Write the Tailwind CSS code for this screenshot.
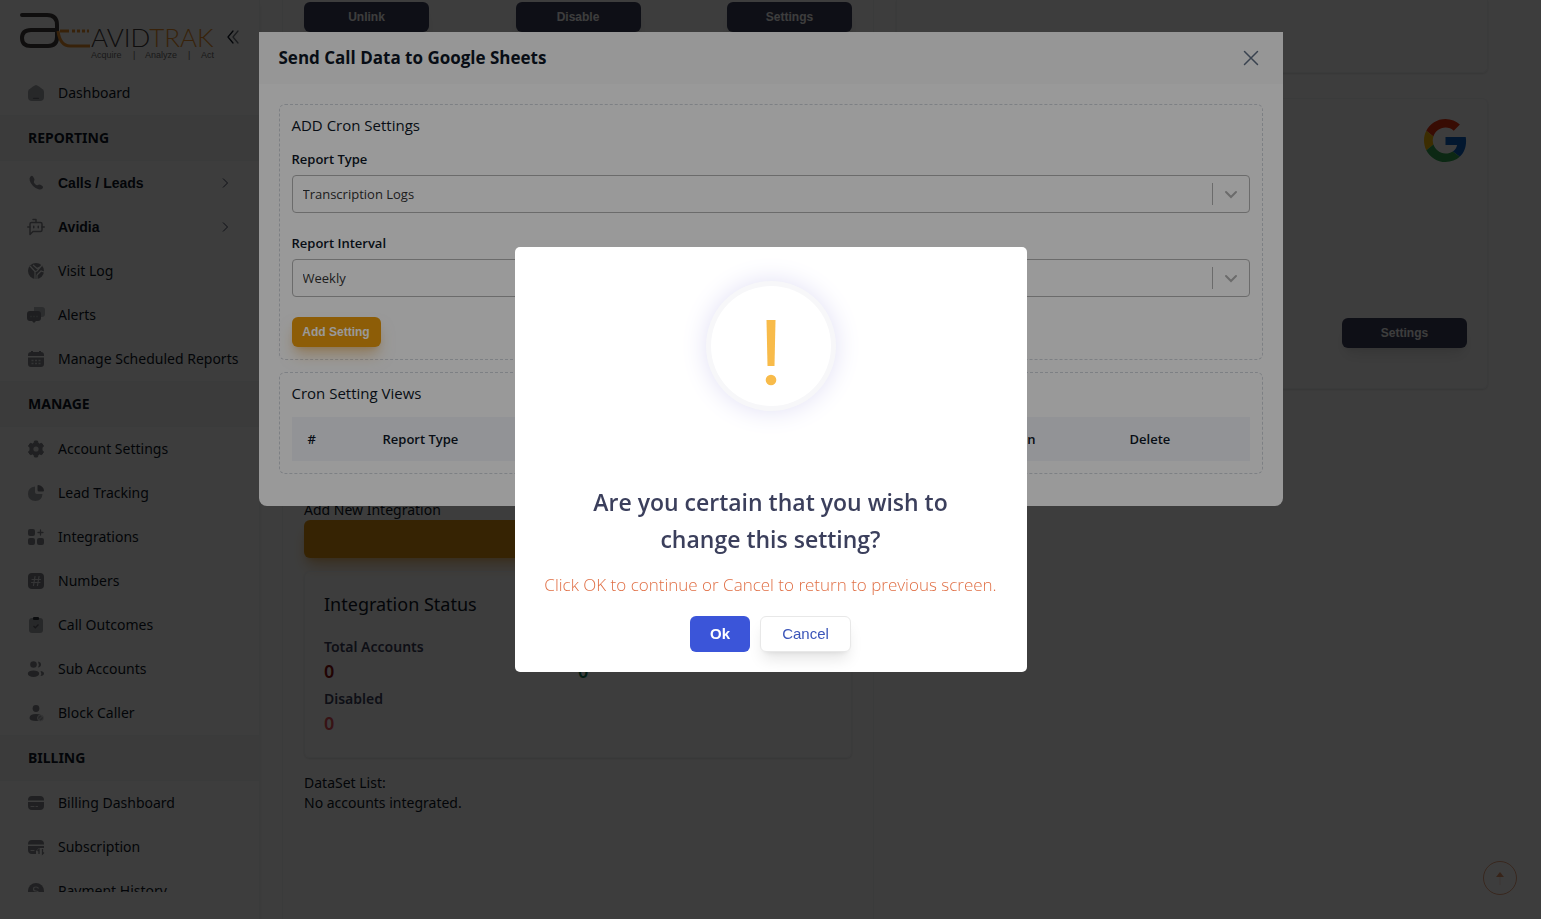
<!DOCTYPE html>
<html lang="en">
<head>
    <meta charset="UTF-8">
    <meta name="viewport" content="width=device-width, initial-scale=1.0">
    <title>AvidTrak - Integrations</title>
    <script src="https://cdn.jsdelivr.net/npm/@tailwindcss/browser@4"></script>
</head>
<body class="h-screen overflow-hidden bg-white font-['Noto_Sans',sans-serif] text-sm text-[#0e1726]">

    <div class="flex h-screen">
        <!-- Sidebar -->
        <aside class="flex h-screen w-[260px] shrink-0 flex-col border-r border-gray-100 bg-white pb-[27px] shadow-md">
            <div class="flex h-[70px] shrink-0 items-center justify-between pl-[18px] pr-[17px]">
                <a href="#" aria-label="AvidTrak">
                    <svg class="h-[60px] w-[200px]" viewBox="0 0 200 60" fill="none">
                        <path d="M4 10H29Q39 10 39 20V32Q39 41 30 41H13Q4 41 4 33Q4 25 13 25H39" stroke="#3f3a3a" stroke-width="4" stroke-linecap="round"/>
                        <path d="M40 26Q42 41 52 41H72M42 26H51" stroke="#e8902c" stroke-width="3"/>
                        <path d="M54 26H71" stroke="#e8902c" stroke-width="3" stroke-dasharray="3 2"/>
                        <text x="73" y="42" font-family="Lato" font-weight="300" font-size="26" fill="#3f3a3a">AVID<tspan fill="#e8902c">TRAK</tspan></text>
                        <g font-family="Liberation Sans" font-size="9" fill="#6b6b6b">
                            <text x="73" y="53">Acquire</text>
                            <text x="115" y="53">|</text>
                            <text x="127" y="53">Analyze</text>
                            <text x="170" y="53">|</text>
                            <text x="183" y="53">Act</text>
                        </g>
                    </svg>
                </a>
                <button type="button" aria-label="Collapse menu" class="pt-1">
                    <svg class="h-[18px] w-[18px]" viewBox="0 0 18 18" fill="none" stroke="#0e1726" stroke-width="1.300" stroke-linecap="round" stroke-linejoin="round"><path d="M9 3L4 9L9 15"/><path d="M14 3L9 9L14 15" opacity=".6"/></svg>
                </button>
            </div>

            <nav class="min-h-0 grow overflow-hidden text-[#0e1726]">
                <a href="#" class="flex h-[45px] items-center gap-[13px] pl-[27px]">
                    <svg class="h-[18px] w-[18px]" viewBox="0 0 18 18" fill="#a4a6ab"><path d="M9 1Q10 1 12 2.500L16 5.500Q17 6.500 17 8V13Q17 17 13 17H5Q1 17 1 13V8Q1 6.500 2 5.500L6 2.500Q8 1 9 1Z"/><path d="M6.500 14.300H11.500" stroke="#6e7178" stroke-width="1.200" stroke-linecap="round"/></svg>
                    Dashboard
                </a>
                <h2 class="flex h-[46px] items-center border-y border-gray-100 bg-[#f7f7f7] pl-7 font-bold">REPORTING</h2>
                <a href="#" class="flex h-11 items-center gap-[13px] pl-[27px] pr-[30px] font-['Liberation_Sans',sans-serif] font-bold">
                    <svg class="h-[18px] w-[18px]" viewBox="0 0 18 18" fill="#8a8c92"><path d="M6 2.600L7.200 4.600Q8 6 7 7.200Q6.300 8.300 8 10Q9.700 11.700 10.800 11Q12 10 13.400 10.800L15.500 12Q16.700 13 15.500 14.500Q14 16 11.500 15.300Q8.500 14.500 6 12Q3.500 9.500 2.700 6.500Q2 4 3.500 2.500Q5 1.200 6 2.600Z"/></svg>
                    <span class="grow">Calls / Leads</span>
                    <svg class="h-3 w-2" viewBox="0 0 8 12" fill="none" stroke="#3b3f5c"><path d="M2 1.500L6.500 6L2 10.500"/></svg>
                </a>
                <a href="#" class="flex h-11 items-center gap-[13px] pl-[27px] pr-[30px] font-['Liberation_Sans',sans-serif] font-bold">
                    <svg class="h-[18px] w-[18px]" viewBox="0 0 24 24" fill="none" stroke="#85878d" stroke-width="2" stroke-linecap="round" stroke-linejoin="round"><path d="M12 6V2H8"/><path d="M8 18L4 22V8Q4 6 6 6H18Q20 6 20 8V16Q20 18 18 18Z"/><path d="M1 12H4M9 11V13M15 11V13M20 12H23"/></svg>
                    <span class="grow">Avidia</span>
                    <svg class="h-3 w-2" viewBox="0 0 8 12" fill="none" stroke="#3b3f5c"><path d="M2 1.500L6.500 6L2 10.500"/></svg>
                </a>
                <a href="#" class="flex h-11 items-center gap-[13px] pl-[27px]">
                    <svg class="h-[18px] w-[18px]" viewBox="0 0 18 18"><circle cx="9" cy="9" r="8" fill="#85878d"/><path d="M3 4L8 9.500V17M15 3L10 9L8 9.500M6 3L10 6.500L13 5M10 13L14 9L17 10M10 13V17" fill="none" stroke="#fff" stroke-width="1.200"/></svg>
                    Visit Log
                </a>
                <a href="#" class="flex h-11 items-center gap-[13px] pl-[27px]">
                    <svg class="h-[18px] w-[18px]" viewBox="0 0 18 18"><path d="M7 1H15Q18 1 18 4V8Q18 11 15 11H7Z" fill="#b9bbc0"/><path d="M3 5H11Q14 5 14 8V12Q14 15 11 15H9L7 17L5 15H3Q0 15 0 12V8Q0 5 3 5Z" fill="#7c7e85"/><path d="M3.500 10.500H4.500M6.500 10.500H7.500M9.500 10.500H10.500" stroke="#b9bbc0" stroke-width="1.400"/></svg>
                    Alerts
                </a>
                <a href="#" class="flex h-11 items-center gap-[13px] pl-[27px]">
                    <svg class="h-[18px] w-[18px]" viewBox="0 0 18 18"><path d="M4 1H6V2H12V1H14V2Q17 2 17 5V6H1V5Q1 2 4 2ZM1 7.500H17V14Q17 17 14 17H4Q1 17 1 14Z" fill="#85878d"/><path d="M4.500 10.500H13.500M4.500 13.500H13.500" stroke="#d4d5d8" stroke-width="1.500" stroke-dasharray="2 1.500"/></svg>
                    Manage Scheduled Reports
                </a>
                <h2 class="flex h-[46px] items-center border-y border-gray-100 bg-[#f7f7f7] pl-7 font-bold">MANAGE</h2>
                <a href="#" class="flex h-11 items-center gap-[13px] pl-[27px]">
                    <svg class="h-[18px] w-[18px]" viewBox="0 0 18 18"><path d="M7.500 1H10.500L11 3.200L12.500 4L14.700 3.300L16.500 6L15 7.800V10.200L16.500 12L14.700 14.700L12.500 14L11 14.800L10.500 17H7.500L7 14.800L5.500 14L3.300 14.700L1.500 12L3 10.200V7.800L1.500 6L3.300 3.300L5.500 4L7 3.200Z" fill="#85878d" stroke="#85878d" stroke-linejoin="round"/><circle cx="9" cy="9" r="2.600" fill="#e4e5e7"/></svg>
                    Account Settings
                </a>
                <a href="#" class="flex h-11 items-center gap-[13px] pl-[27px]">
                    <svg class="h-[18px] w-[18px]" viewBox="0 0 18 18"><path d="M8 2.500V8Q8 10 10 10H15.500Q15 17 8.500 17Q1 16.500 1 10Q1 3 8 2.500Z" fill="#a4a6ab"/><path d="M10.500 1.500Q10.500 1 11.500 1Q16.500 2 17 6.500Q17 7.500 16 7.500H12Q10.500 7.500 10.500 6Z" fill="#7c7e85"/></svg>
                    Lead Tracking
                </a>
                <a href="#" class="flex h-11 items-center gap-[13px] pl-[27px]">
                    <svg class="h-[18px] w-[18px]" viewBox="0 0 18 18" fill="#85878d"><rect x="1" y="1" width="7" height="7" rx="2"/><rect x="1" y="10" width="7" height="7" rx="2"/><rect x="10" y="10" width="7" height="7" rx="2"/><path d="M13.500 2V7M11 4.500H16" stroke="#85878d" stroke-width="1.300" stroke-linecap="round"/></svg>
                    Integrations
                </a>
                <a href="#" class="flex h-11 items-center gap-[13px] pl-[27px]">
                    <svg class="h-[18px] w-[18px]" viewBox="0 0 18 18"><rect x="1" y="1" width="16" height="16" rx="4" fill="#7c7e85"/><path d="M8 4.500L6.500 13.500M12 4.500L10.500 13.500M5 7.500H13.500M4.500 10.500H13" stroke="#dcdde0" stroke-width="1.200" stroke-linecap="round"/></svg>
                    Numbers
                </a>
                <a href="#" class="flex h-11 items-center gap-[13px] pl-[27px]">
                    <svg class="h-[18px] w-[18px]" viewBox="0 0 18 18"><rect x="2" y="2" width="14" height="15" rx="3" fill="#a4a6ab"/><rect x="6" y="1" width="6" height="3" rx="1" fill="#30323a"/><path d="M6.500 10L8.300 11.800L11.500 8.500" fill="none" stroke="#5f6168" stroke-width="1.300"/></svg>
                    Call Outcomes
                </a>
                <a href="#" class="flex h-11 items-center gap-[13px] pl-[27px]">
                    <svg class="h-[18px] w-[18px]" viewBox="0 0 18 18" fill="#85878d"><circle cx="6.500" cy="4.500" r="3.300"/><ellipse cx="6.500" cy="13.700" rx="5.700" ry="3.300"/><path d="M11 1.500Q14 2 14 4.500Q14 7 11 7.500Q12.500 4.500 11 1.500ZM13.500 11Q17 11.500 17 13.500Q17 15.500 13.500 16Q15 13.500 13.500 11Z"/></svg>
                    Sub Accounts
                </a>
                <a href="#" class="flex h-11 items-center gap-[13px] pl-[27px]">
                    <svg class="h-[18px] w-[18px]" viewBox="0 0 18 18"><circle cx="9" cy="4.500" r="3.400" fill="#85878d"/><path d="M2.500 14Q2.500 10 9 10Q15.500 10 15.500 14Q15.500 17 9 17Q2.500 17 2.500 14Z" fill="#85878d"/><circle cx="13.500" cy="14" r="3" fill="#a4a6ab" stroke="#e4e5e7"/><path d="M11.500 16L15.500 12" stroke="#e4e5e7"/></svg>
                    Block Caller
                </a>
                <h2 class="flex h-[46px] items-center border-y border-gray-100 bg-[#f7f7f7] pl-7 font-bold">BILLING</h2>
                <a href="#" class="flex h-11 items-center gap-[13px] pl-[27px]">
                    <svg class="h-[18px] w-[18px]" viewBox="0 0 18 18" fill="#85878d"><path d="M5 2H13Q17 2 17 6V6.500H1V6Q1 2 5 2ZM1 8H17V12Q17 16 13 16H5Q1 16 1 12Z"/><path d="M4 12.500H7M9 12.500H10.500" stroke="#e4e5e7" stroke-width="1.200" stroke-linecap="round"/></svg>
                    Billing Dashboard
                </a>
                <a href="#" class="flex h-11 items-center gap-[13px] pl-[27px]">
                    <svg class="h-[18px] w-[18px]" viewBox="0 0 18 18" fill="#85878d"><path d="M5 2H13Q17 2 17 6V6.500H1V6Q1 2 5 2ZM1 8H17V10H12L9 13V16H5Q1 16 1 12Z"/><path d="M4 12.500H7" stroke="#e4e5e7" stroke-width="1.200" stroke-linecap="round"/><path d="M12 16V11.500L10.500 13M15.500 11V16L17 14.500" fill="none" stroke="#85878d" stroke-width="1.300"/></svg>
                    Subscription
                </a>
                <a href="#" class="flex h-11 items-center gap-[13px] pl-[27px]">
                    <svg class="h-[18px] w-[18px]" viewBox="0 0 18 18"><circle cx="9" cy="9" r="8" fill="#85878d"/><path d="M11.500 6.500Q11 5 9 5Q6.500 5 6.500 7Q6.500 9 9 9Q11.500 9 11.500 11Q11.500 13 9 13Q7 13 6.500 11.500" fill="none" stroke="#e4e5e7" stroke-width="1.200"/></svg>
                    Payment History
                </a>
            </nav>
        </aside>

        <!-- Main content -->
        <main class="grid grow grid-cols-2 gap-[22px] pl-[22px] pr-[53px]">
            <section class="flex flex-col border-x border-gray-100 px-[21px] pt-[2px]">
                <div class="flex justify-between font-['Liberation_Sans',sans-serif] text-xs font-bold text-white">
                    <button type="button" class="h-[30px] w-[125px] rounded-md bg-[#3b3f5c] shadow-lg">Unlink</button>
                    <button type="button" class="h-[30px] w-[125px] rounded-md bg-[#3b3f5c] shadow-lg">Disable</button>
                    <button type="button" class="h-[30px] w-[125px] rounded-md bg-[#3b3f5c] shadow-lg">Settings</button>
                </div>
                <p class="mt-[468px] leading-5">Add New Integration</p>
                <button type="button" aria-label="Add new integration" class="h-[38px] rounded-md bg-[#e2940f] shadow-lg shadow-[#e2a03f]/60"></button>

                <div class="mt-[13px] h-[187px] rounded-md border border-gray-100 px-[19px] pt-[18px] shadow-sm">
                    <h3 class="text-lg leading-7">Integration Status</h3>
                    <div class="mt-[19px] grid grid-cols-2 gap-y-1 text-[#3b3f5c]">
                        <div>
                            <p class="font-semibold leading-5">Total Accounts</p>
                            <p class="text-lg font-semibold leading-7 text-[#8b1010]">0</p>
                        </div>
                        <div>
                            <p class="font-semibold leading-5">Enabled</p>
                            <p class="text-lg font-semibold leading-7 text-[#0d7a55]">0</p>
                        </div>
                        <div>
                            <p class="font-semibold leading-5">Disabled</p>
                            <p class="text-lg font-semibold leading-7 text-[#e7515a]">0</p>
                        </div>
                    </div>
                </div>
                <p class="mt-[15px] leading-5">DataSet List:</p>
                <p class="leading-5">No accounts integrated.</p>
            </section>

            <div class="flex flex-col">
                <section class="h-[73px] rounded-b-md border border-t-0 border-gray-100 shadow-sm"></section>
                <section class="mt-[25px] flex h-[291px] flex-col items-end justify-between rounded-md border border-gray-100 px-5 pb-10 pt-5 shadow-sm">
                    <svg class="h-[43px] w-[43px]" viewBox="0 0 48 48">
                        <path fill="#e8330f" d="M24 9.500c3.540 0 6.710 1.220 9.210 3.600l6.850-6.850C35.900 2.380 30.470 0 24 0 14.620 0 6.510 5.380 2.560 13.220l7.980 6.190C12.430 13.720 17.740 9.500 24 9.500z"/>
                        <path fill="#0b62c4" d="M46.980 24.550c0-1.570-.15-3.090-.38-4.550H24v9.020h12.940c-.58 2.960-2.260 5.480-4.780 7.180l7.730 6c4.510-4.180 7.090-10.360 7.090-17.650z"/>
                        <path fill="#fbbc05" d="M10.530 28.590c-.48-1.450-.76-2.990-.76-4.590s.27-3.140.76-4.590l-7.980-6.190C.92 16.460 0 20.120 0 24c0 3.880.92 7.540 2.560 10.780l7.970-6.190z"/>
                        <path fill="#34a853" d="M24 48c6.480 0 11.930-2.130 15.890-5.810l-7.730-6c-2.150 1.450-4.920 2.300-8.160 2.300-6.260 0-11.570-4.220-13.470-9.910l-7.980 6.190C6.510 42.620 14.620 48 24 48z"/>
                    </svg>
                    <button type="button" class="h-[30px] w-[125px] rounded-md bg-[#3b3f5c] font-['Liberation_Sans',sans-serif] text-xs font-bold text-white shadow-lg">Settings</button>
                </section>
            </div>
        </main>
    </div>

    <button type="button" aria-label="Scroll to top" class="fixed bottom-6 right-6 flex h-[34px] w-[34px] items-center justify-center rounded-full border border-[#e07b45]/70">
        <svg class="h-4 w-4" viewBox="0 0 16 16" fill="#e07b45" opacity=".8"><path d="M8 2L12 7H4Z"/><path d="M8 7V15" stroke="#e07b45" opacity=".3"/></svg>
    </button>

    <!-- Google Sheets modal -->
    <div class="fixed inset-0 flex items-start justify-center bg-black/60 pt-8">
        <div role="dialog" aria-labelledby="modalTitle" class="w-full max-w-5xl rounded-b-lg bg-white font-['Open_Sans',sans-serif]">
            <div class="flex h-[52px] items-center justify-between bg-[#fbfbfb] pl-5 pr-6">
                <h5 id="modalTitle" class="text-[17px] font-bold">Send Call Data to Google Sheets</h5>
                <button type="button" aria-label="Close">
                    <svg class="h-4 w-4" viewBox="0 0 16 16" fill="none" stroke="#5f6f84" stroke-width="1.500" stroke-linecap="round"><path d="M1.500 1.500L14.500 14.500M14.500 1.500L1.500 14.500"/></svg>
                </button>
            </div>
            <div class="flex flex-col gap-3 px-5 pb-8 pt-5">
                <div class="rounded-md border border-dashed border-gray-300 px-3 pb-3 pt-2">
                    <h6 class="text-[15px] leading-6">ADD Cron Settings</h6>
                    <label for="reportType" class="mt-3 block text-[13px] font-semibold leading-5">Report Type</label>
                    <div class="relative mt-[6px]">
                        <select id="reportType" class="h-[38px] w-full appearance-none rounded border border-[#b3b3b3] bg-white px-[10px] text-[13px] text-[#333333]">
                            <option>Transcription Logs</option>
                        </select>
                        <span class="pointer-events-none absolute inset-y-2 right-px flex items-center border-l border-[#b3b3b3] px-2">
                            <svg class="h-5 w-5" viewBox="0 0 20 20" fill="none" stroke="#b3b3b3" stroke-width="2" stroke-linecap="round"><path d="M5 8L10 13L15 8"/></svg>
                        </span>
                    </div>
                    <label for="reportInterval" class="mt-5 block text-[13px] font-semibold leading-5">Report Interval</label>
                    <div class="relative mt-[6px]">
                        <select id="reportInterval" class="h-[38px] w-full appearance-none rounded border border-[#b3b3b3] bg-white px-[10px] text-[13px] text-[#333333]">
                            <option>Weekly</option>
                        </select>
                        <span class="pointer-events-none absolute inset-y-2 right-px flex items-center border-l border-[#b3b3b3] px-2">
                            <svg class="h-5 w-5" viewBox="0 0 20 20" fill="none" stroke="#b3b3b3" stroke-width="2" stroke-linecap="round"><path d="M5 8L10 13L15 8"/></svg>
                        </span>
                    </div>
                    <button type="button" class="mt-5 h-[30px] w-[89px] rounded-md bg-[#eb9b0c] font-['Liberation_Sans',sans-serif] text-xs font-bold text-white shadow-lg shadow-[#e2a03f]/50">Add Setting</button>
                </div>

                <div class="rounded-md border border-dashed border-gray-300 px-3 pb-3 pt-2">
                    <h6 class="text-[15px] leading-6">Cron Setting Views</h6>
                    <table class="mt-3 w-full table-fixed text-left text-[13px]">
                        <thead class="bg-[#f3f6fa]">
                            <tr class="h-11">
                                <th class="w-[75px] px-4 font-semibold">#</th>
                                <th class="px-4 font-semibold">Report Type</th>
                                <th class="px-4 font-semibold">Interval</th>
                                <th class="w-[134px] px-4 font-semibold">Action</th>
                                <th class="w-[136px] px-4 font-semibold">Delete</th>
                            </tr>
                        </thead>
                    </table>
                </div>
            </div>
        </div>
    </div>

    <!-- Confirmation -->
    <div class="fixed inset-0 flex items-center justify-center bg-black/40">
        <div role="alertdialog" aria-labelledby="confirmTitle" class="flex w-lg flex-col items-center rounded-[5px] bg-white px-5 pb-5 pt-[39px] font-['Open_Sans',sans-serif]">
            <div class="flex h-[120px] w-[120px] items-center justify-center rounded-full bg-white pt-[14px] shadow-[0_0_0_5px_#f7f7f9,0_0_28px_3px_#dcdaf3]">
                <svg class="h-[68px] w-3" viewBox="0 0 12 68" fill="#f8bb4a"><path d="M1.500 1H10.500L9.500 47H2.500Z"/><circle cx="6" cy="61" r="5.300"/></svg>
            </div>
            <h2 id="confirmTitle" class="mt-[78px] w-[400px] text-center text-[23px] font-semibold leading-[37px] text-[#3b3f5c]">Are you certain that you wish to change this setting?</h2>
            <p class="mt-[15px] text-[17px] font-light leading-6 text-[#e06f45]">Click OK to continue or Cancel to return to previous screen.</p>
            <div class="mt-[19px] flex gap-[10px] font-['Liberation_Sans',sans-serif] text-[15px]">
                <button type="button" class="h-9 w-[60px] rounded-md bg-[#3b55d9] font-bold text-white">Ok</button>
                <button type="button" class="h-9 w-[91px] rounded-md border border-[#e8e8e8] bg-white text-[#3b55b9] shadow-lg">Cancel</button>
            </div>
        </div>
    </div>

</body>
</html>
